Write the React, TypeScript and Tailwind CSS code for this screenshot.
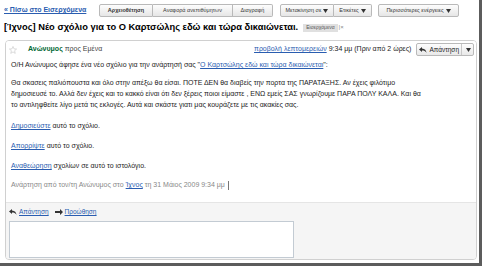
import React from "react";

const Caret = () => (
  <svg width="5" height="4" viewBox="0 0 5 4" className="inline-block ml-[2px]">
    <path d="M0 0 L5 0 L2.5 4 Z" fill="#333" />
  </svg>
);

const ReplyIcon = ({ color = "#333" }: { color?: string }) => (
  <svg width="8" height="6" viewBox="0 0 8 6" className="inline-block">
    <path d="M3 0 L0 2.5 L3 5 L3 3.5 C5 3.5 6.5 4 7.5 6 C7.3 3.5 5.8 1.6 3 1.5 Z" fill={color} />
  </svg>
);

const ForwardIcon = () => (
  <svg width="8" height="6" viewBox="0 0 8 6" className="inline-block">
    <path d="M5 0 L8 3 L5 6 L5 4 L0 4 L0 2 L5 2 Z" fill="#333" />
  </svg>
);

const Star = () => (
  <svg width="8" height="8" viewBox="0 0 10 10">
    <path
      d="M5 0.6 L6.3 3.6 L9.5 3.8 L7 5.9 L7.8 9.2 L5 7.4 L2.2 9.2 L3 5.9 L0.5 3.8 L3.7 3.6 Z"
      fill="none"
      stroke="#c8c8c8"
      strokeWidth="0.8"
    />
  </svg>
);

const Btn = ({
  children,
  bold,
  cls = "",
}: {
  children: React.ReactNode;
  bold?: boolean;
  cls?: string;
}) => (
  <div
    className={`h-[13px] flex items-center justify-center px-[3px] border border-[#b9b9b9] bg-gradient-to-b from-[#fdfdfd] to-[#e6e6e6] text-[5.5px] text-[#333] whitespace-nowrap ${
      bold ? "font-bold" : ""
    } ${cls}`}
  >
    {children}
  </div>
);

export default function App() {
  return (
    <div
      className="w-[484px] h-[269px] bg-white overflow-hidden"
      style={{ fontFamily: '"Liberation Sans", Arial, sans-serif' }}
    >
      <div className="w-[482px] h-[266px] border-r-[3px] border-b-[3px] border-[#5c5c5c] bg-white flex flex-col">
        {/* toolbar */}
        <div className="flex items-center pt-[4px] pl-[4px] h-[17px]">
          <span className="text-[7px] font-bold text-[#2a5db0] underline whitespace-nowrap w-[95px]">
            « Πίσω στο Εισερχόμενα
          </span>
          <div className="flex">
            <Btn bold cls="w-[54px] rounded-l-[2px]">Αρχειοθέτηση</Btn>
            <Btn cls="w-[80px] border-l-0">Αναφορά ανεπιθύμητων</Btn>
            <Btn cls="w-[40px] border-l-0 rounded-r-[2px]">Διαγραφή</Btn>
          </div>
          <div className="flex ml-[7px]">
            <Btn cls="w-[54px] rounded-l-[2px]">
              Μετακίνηση σε <Caret />
            </Btn>
            <Btn cls="w-[38px] border-l-0 rounded-r-[2px]">
              Ετικέτες <Caret />
            </Btn>
          </div>
          <div className="flex ml-[6px]">
            <Btn cls="w-[81px] rounded-[2px]">
              Περισσότερες ενέργειες <Caret />
            </Btn>
          </div>
        </div>

        {/* title */}
        <div className="flex items-center pl-[4px] mt-[4px] h-[13px]">
          <span className="text-[9.3px] font-bold text-black whitespace-nowrap">
            [Ίχνος] Νέο σχόλιο για το Ο Καρτσώλης εδώ και τώρα δικαιώνεται.
          </span>
          <span className="ml-[5px] bg-[#e0e0e0] text-[#555] text-[5px] px-[3px] h-[8px] flex items-center">
            Εισερχόμενα
          </span>
          <span className="text-[#888] text-[6px] ml-[1px]">|×</span>
        </div>

        {/* card */}
        <div className="ml-[5px] mt-[6px] w-[472px] flex-1 mb-[3px] border border-[#d0d0d0] rounded-[4px] flex flex-col overflow-hidden">
          {/* header */}
          <div className="flex items-center h-[17px] pl-[3px] pr-[2px] bg-white">
            <Star />
            <span className="ml-[11px] text-[7px] font-bold text-[#006633]">Ανώνυμος</span>
            <span className="ml-[2px] text-[7px] text-[#444]">προς Εμένα</span>
            <span className="ml-auto text-[7px] text-[#2a5db0] underline">προβολή λεπτομερειών</span>
            <span className="ml-[2px] text-[7px] text-[#222]">9:34 μμ (Πριν από 2 ώρες)</span>
            <div className="ml-[5px] flex h-[13px] border border-[#b9b9b9] rounded-[2px] bg-gradient-to-b from-[#fdfdfd] to-[#e9e9e9]">
              <div className="flex items-center gap-[2px] px-[2px] text-[6.5px] text-[#222]">
                <ReplyIcon />
                <span>Απάντηση</span>
              </div>
              <div className="flex items-center px-[2px] border-l border-[#c8c8c8]">
                <Caret />
              </div>
            </div>
          </div>

          {/* body */}
          <div className="px-[5px] pt-[1px] text-[7px] text-[#222] leading-[11px] bg-white">
            <p>
              Ο/Η Ανώνυμος άφησε ένα νέο σχόλιο για την ανάρτησή σας "
              <span className="text-[#2a5db0] underline">Ο Καρτσώλης εδώ και τώρα δικαιώνεται</span>":
            </p>
            <p className="mt-[7px]">
              Θα σκασεις παλιόπουστα και όλο στην απέξω θα είσαι. ΠΟΤΕ ΔΕΝ θα διαβείς την πορτα της ΠΑΡΑΤΑΞΗΣ. Αν έχεις φιλότιμο
              <br />
              δημοσιευσέ το. Αλλά δεν έχεις και το κακκό είναι ότι δεν ξέρεις ποιοι είμαστε , ΕΝΩ εμείς ΣΑΣ γνωρίζουμε ΠΑΡΑ ΠΟΛΥ ΚΑΛΑ. Και θα
              <br />
              το αντιληφθείτε λίγο μετά τις εκλογές. Αυτά και σκάστε γιατι μας κουράζετε με τις ακακίες σας.
            </p>
            <p className="mt-[10px]">
              <span className="text-[#2a5db0] underline">Δημοσιεύστε</span> αυτό το σχόλιο.
            </p>
            <p className="mt-[9px]">
              <span className="text-[#2a5db0] underline">Απορρίψτε</span> αυτό το σχόλιο.
            </p>
            <p className="mt-[9px]">
              <span className="text-[#2a5db0] underline">Αναθεώρηση</span> σχολίων σε αυτό το ιστολόγιο.
            </p>
            <p className="mt-[8px] text-[#888]">
              Ανάρτηση από τον/τη Ανώνυμος στο{" "}
              <span className="text-[#2a5db0] underline">Ίχνος</span> τη 31 Μάιος 2009 9:34 μμ
              <span className="inline-block w-[1px] h-[9px] bg-[#777] ml-[3px] align-middle" />
            </p>
            <div className="h-[12px]" />
          </div>

          {/* footer */}
          <div className="flex-1 bg-[#f5f5f5] border-t border-[#e5e5e5] px-[3px] pt-[4px]">
            <div className="flex items-center gap-[2px] text-[6.5px]">
              <ReplyIcon />
              <span className="text-[#2a5db0] underline">Απάντηση</span>
              <span className="ml-[4px]">
                <ForwardIcon />
              </span>
              <span className="text-[#2a5db0] underline">Προώθηση</span>
            </div>
            <div className="mt-[4px] w-[285px] h-[37px] bg-white border border-[#c3cbd3]" />
          </div>
        </div>
      </div>
    </div>
  );
}
